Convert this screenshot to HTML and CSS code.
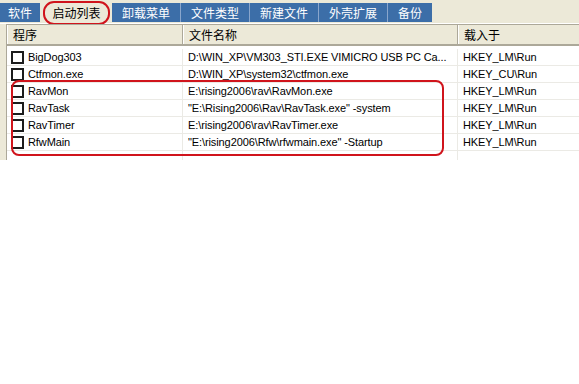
FILE: index.html
```html
<!DOCTYPE html>
<html>
<head>
<meta charset="utf-8">
<link rel="stylesheet" href="styles.css">
</head>
<body>
    <div class="window">
        <div class="tabs">
            <div class="tab t1">软件</div>
            <div class="tab selected">启动列表<span class="mark-oval"></span></div>
            <div class="tab t3">卸载菜单</div>
            <div class="tab">文件类型</div>
            <div class="tab">新建文件</div>
            <div class="tab">外壳扩展</div>
            <div class="tab t7">备份</div>
        </div>
        <div class="list">
            <div class="head">
                <div class="hcell c1">程序</div>
                <div class="hcell c2">文件名称</div>
                <div class="hcell c3">载入于</div>
            </div>
            <div class="row">
                <div class="cell c1"><span class="check"></span>BigDog303</div>
                <div class="cell c2">D:\WIN_XP\VM303_STI.EXE VIMICRO USB PC Ca...</div>
                <div class="cell c3">HKEY_LM\Run</div>
            </div>
            <div class="row">
                <div class="cell c1"><span class="check"></span>Ctfmon.exe</div>
                <div class="cell c2">D:\WIN_XP\system32\ctfmon.exe</div>
                <div class="cell c3">HKEY_CU\Run</div>
            </div>
            <div class="row">
                <div class="cell c1"><span class="check"></span>RavMon</div>
                <div class="cell c2">E:\rising2006\rav\RavMon.exe</div>
                <div class="cell c3">HKEY_LM\Run</div>
            </div>
            <div class="row">
                <div class="cell c1"><span class="check"></span>RavTask</div>
                <div class="cell c2">"E:\Rising2006\Rav\RavTask.exe" -system</div>
                <div class="cell c3">HKEY_LM\Run</div>
            </div>
            <div class="row">
                <div class="cell c1"><span class="check"></span>RavTimer</div>
                <div class="cell c2">E:\rising2006\rav\RavTimer.exe</div>
                <div class="cell c3">HKEY_LM\Run</div>
            </div>
            <div class="row">
                <div class="cell c1"><span class="check"></span>RfwMain</div>
                <div class="cell c2">"E:\rising2006\Rfw\rfwmain.exe" -Startup</div>
                <div class="cell c3">HKEY_LM\Run</div>
            </div>
            <div class="row empty">
                <div class="cell c1"></div>
                <div class="cell c2"></div>
                <div class="cell c3"></div>
            </div>
            <!-- 红框标注 -->
            <div class="mark-box"></div>
        </div>
    </div>
</body>
</html>
```

FILE: styles.css
```css
html, body {
    margin: 0;
    background: #fff;
    overflow: hidden;
}
.window {
    width: 579px;
    height: 160px;
    background: #ece9d8;
    font-family: "Liberation Sans", "Noto Sans CJK SC", sans-serif;
    font-size: 11px;
    color: #000;
    overflow: hidden;
}
.tabs {
    display: flex;
    height: 20px;
    padding-top: 3px;
    border-bottom: 1px solid #fff;
}
.tab {
    position: relative;
    height: 19px;
    line-height: 19px;
    width: 68px;
    text-align: center;
    background: #3c6ea8;
    color: #fff;
    font-family: "Noto Sans CJK SC", sans-serif;
    font-size: 12px;
    border-left: 1px solid #8aa6cc;
}
.tab.t1 {
    width: 40px;
    border-left: none;
    margin-right: 4px;
}
.tab.t7 {
    width: 44px;
}
.tab.selected {
    width: 65px;
    background: #ece9d8;
    color: #000;
    border-left: none;
    margin-right: 3px;
}
.tab.t3 {
    border-left: none;
}
.mark-oval {
    position: absolute;
    left: -1px;
    top: -2px;
    right: -1px;
    bottom: -3px;
    border: 2px solid #d0141c;
    border-radius: 11px;
}
.list {
    position: relative;
    margin-left: 6px;
    width: 600px;
    height: 140px;
    background: #fff;
    border-top: 1px solid #aca899;
    border-left: 1px solid #aca899;
}
.head {
    display: flex;
    height: 19px;
    background: #ece9d8;
    border-bottom: 2px solid #aca899;
    margin-bottom: 3px;
}
.hcell {
    height: 19px;
    line-height: 19px;
    padding-left: 5px;
    box-sizing: border-box;
    border-left: 1px solid #fff;
    border-right: 1px solid #aca899;
    font-family: "Noto Sans CJK SC", sans-serif;
    font-size: 12px;
}
.c1 { width: 176px; }
.c2 { width: 275px; }
.c3 { width: 149px; }
.hcell.c3 { border-right: none; }
.row {
    display: flex;
    height: 16px;
    border-bottom: 1px solid #ebeae5;
}
.cell {
    height: 16px;
    line-height: 16px;
    padding-left: 5px;
    box-sizing: border-box;
    border-right: 1px solid #ebeae5;
    white-space: nowrap;
    overflow: hidden;
    letter-spacing: -0.1px;
}
.cell.c1 {
    display: flex;
    align-items: center;
    padding-left: 4px;
}
.check {
    width: 9px;
    height: 9px;
    border: 2px solid #1c1c1c;
    margin-right: 4px;
    background: #fff;
}
.mark-box {
    position: absolute;
    left: 4px;
    top: 55px;
    width: 429px;
    height: 72px;
    border: 2px solid #d0141c;
    border-radius: 8px;
}
```
